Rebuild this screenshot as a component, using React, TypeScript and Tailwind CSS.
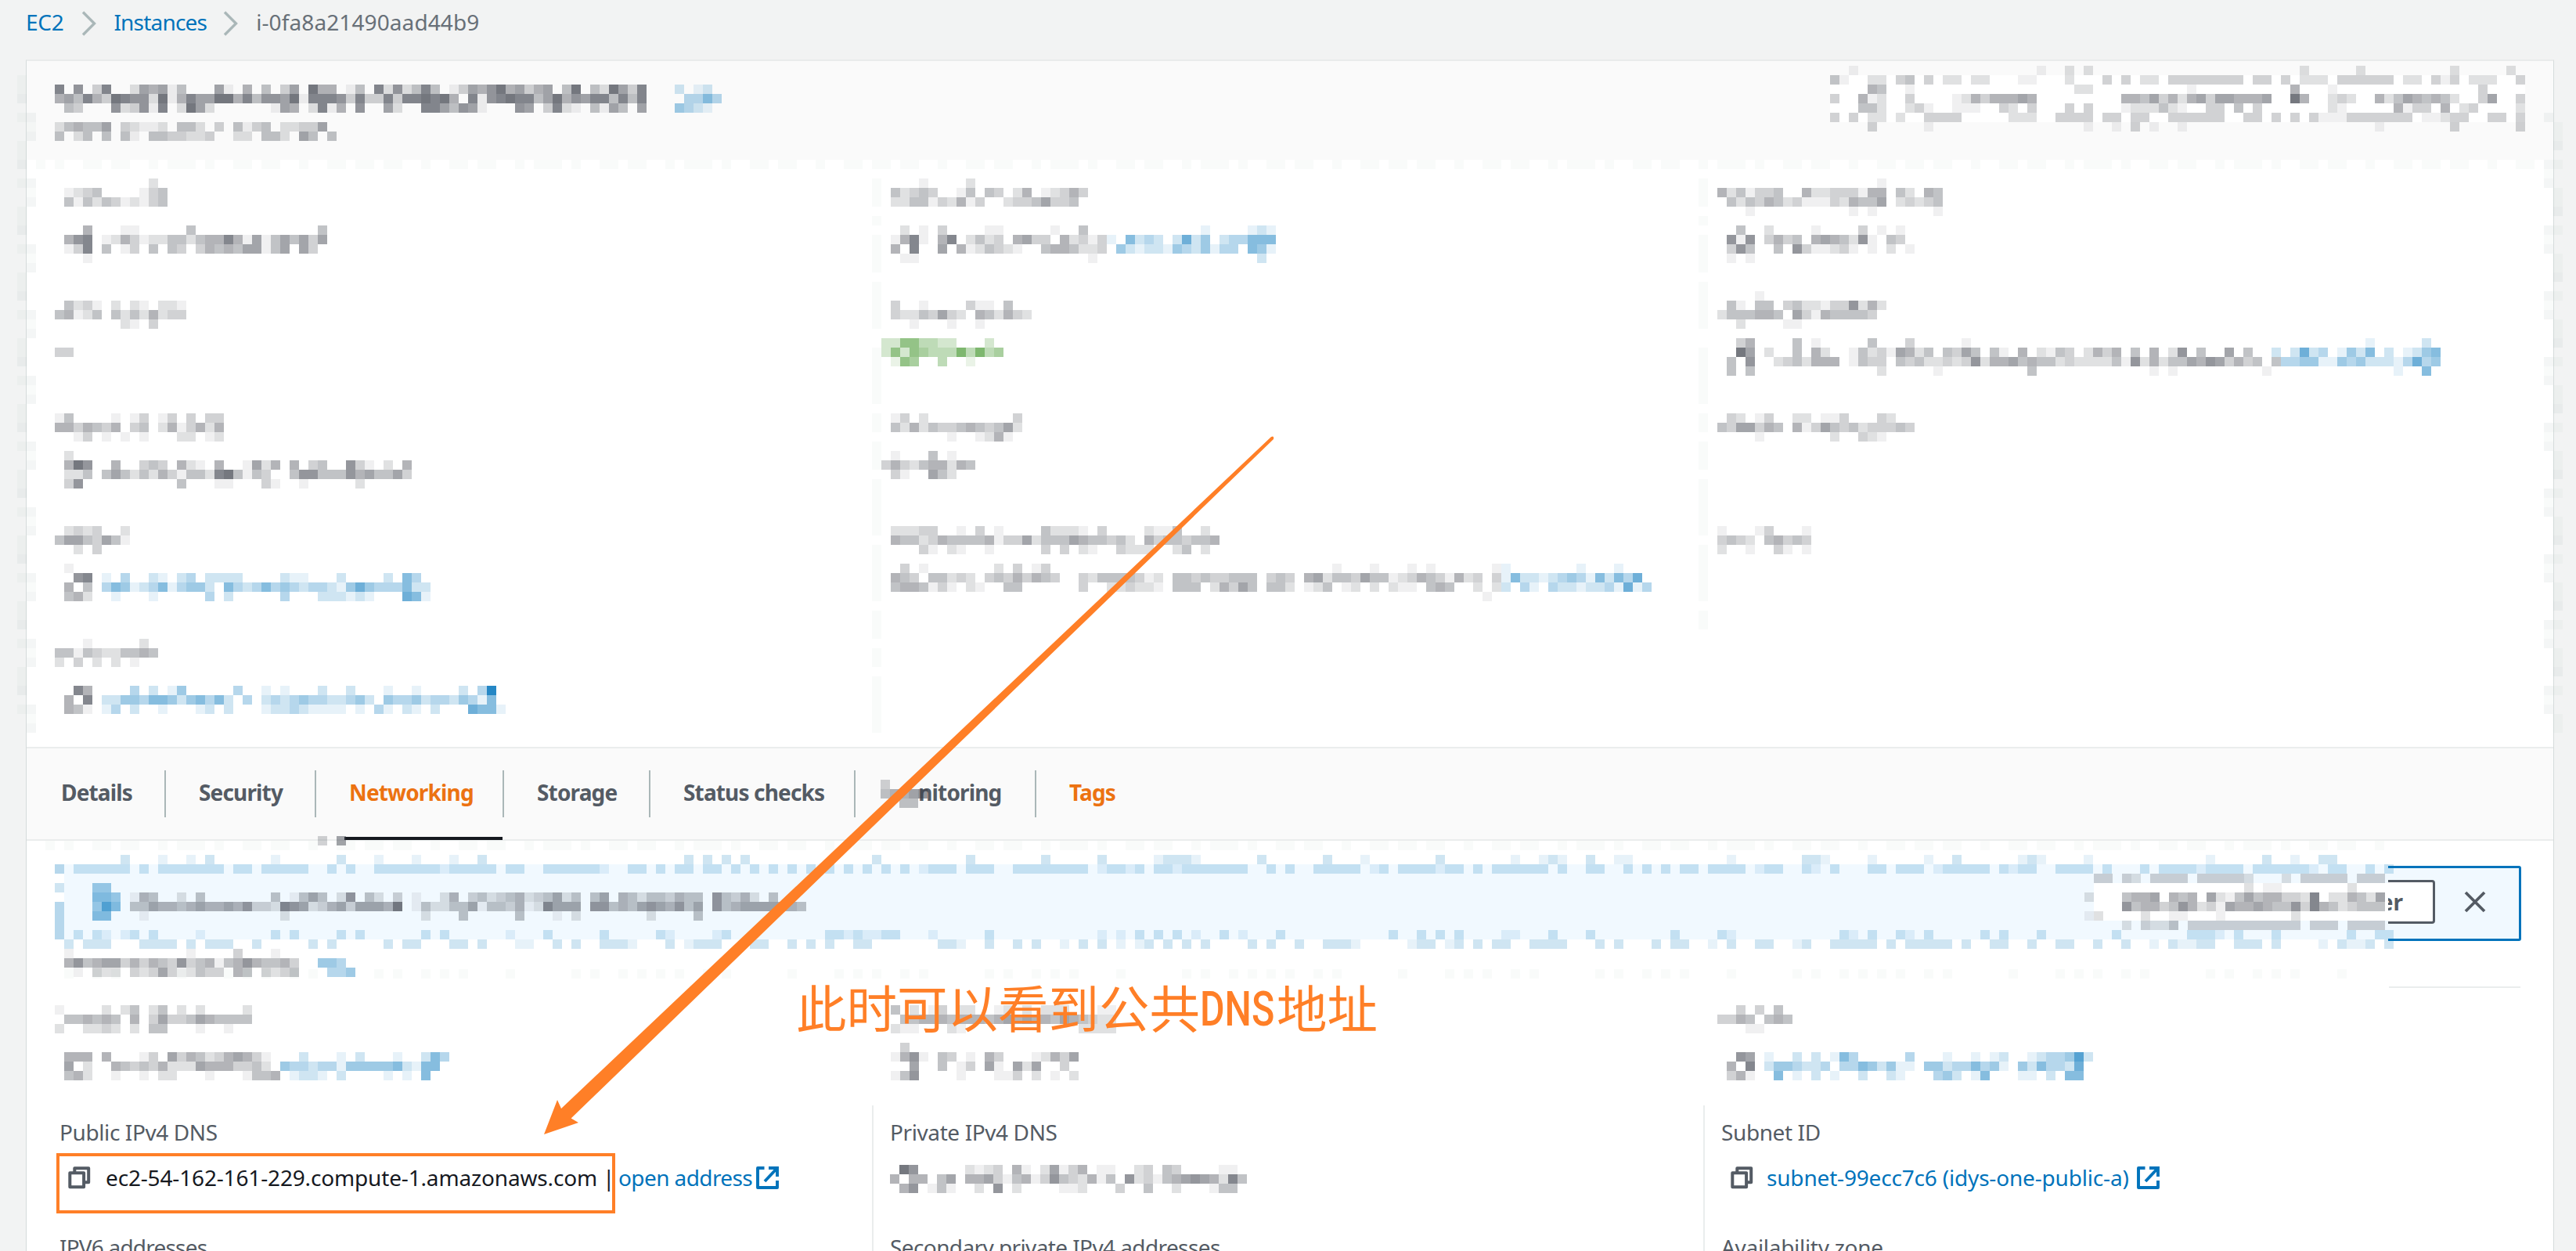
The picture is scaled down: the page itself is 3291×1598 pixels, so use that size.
import React from 'react';

type Tone = 'blue' | 'green';

const CELL = 12;

function shade(ch: string, tone: Tone): [string, number] | null {
  if (ch === '0') return null;
  if (ch === '-') return ['#9fb4b0', 0.06];
  if (ch === '=') return ['#8a9a9a', 0.09];
  if (ch >= '1' && ch <= '9') return ['#3a3f49', Number(ch) * 0.078];
  return [tone === 'green' ? '#1d8102' : '#0073bb', (ch.charCodeAt(0) - 96) * 0.095];
}

/* Pixelated strip: one character per cell, digits are grey levels, letters are coloured levels. */
function Mosaic({ rows, tone = 'blue', className = '' }: { rows: string[]; tone?: Tone; className?: string }) {
  const width = Math.max(1, ...rows.map((r) => r.length)) * CELL;
  const height = rows.length * CELL;
  const rects: React.ReactNode[] = [];
  rows.forEach((row, y) => {
    let x = 0;
    while (x < row.length) {
      let end = x + 1;
      while (end < row.length && row[end] === row[x]) end += 1;
      const s = shade(row[x], tone);
      if (s) {
        rects.push(
          <rect key={`${x}-${y}`} x={x * CELL} y={y * CELL} width={(end - x) * CELL} height={CELL} fill={s[0]} fillOpacity={s[1]} />,
        );
      }
      x = end;
    }
  });
  return (
    <svg width={width} height={height} viewBox={`0 0 ${width} ${height}`} shapeRendering="crispEdges" className={`block shrink-0 ${className}`} aria-hidden="true">
      {rects}
    </svg>
  );
}

function pattern(length: number, step: number, mod: number, limit: number) {
  return Array.from({ length }, (_, i) => ((i * step + Math.floor(i / 5) * 3) % mod < limit ? '-' : '0')).join('');
}

const title = [
  '807038002656140006105040360955014082724840136579563560490429638000b0ab',
  '5648539877291586699584776918887383383889895081789884695768848480000ccec',
  '043000723718029620000001650281507006200886476100076038210416406000dcba',
  '',
  '245446032112044203041340223360',
  '402404041044332230022044206404',
];

const actions = [
  '00100000000000000000001002020000000000000000000000200000200000000020000020',
  '41002203403022022000110002000303022033333333033030222033333302203130222003',
  '00005400100000000000000000220000000000100000000005000100000000000000030000',
  '30051200300001253555650000000005546352563665556009500232005246545420036003',
  '00044200231001110032030003030001222421003304030000000210000051330502300002',
  '30302202003333000002220033330330330033333300330303031113333333011233003303',
  '00003000001000000000000000010010301001000000000000000000001000000030000003',
];

const colA: string[][] = [
  [
    '00000000002', '012340000134', '041424312134', '', '',
    '00050001100000400000000000004', '05780125312244245585161464636', '0138040130404303545466146063', '0001', '', '', '',
  ],
  ['', '04231020210221', '45124042425233', '00000002103', '', '', '33', '', '', '', '', ''],
  [
    '', '140000101301303033', '553543503402513525', '001301010100022012', '',
    '02', '05970050034305210500162505034007310205', '02240464242531442894143004774447564463', '037000000000040001100031001000002', '', '', '',
  ],
  [
    '', '02323002', '46643641', '00203', '',
    '01', '00780a0c00ba0bc0bbbb0000baa000b0000b0ec', '05040cedabceacddb0ecbcecdcbccbadfdcccebb', '045200a000a00000c0b00000c000bbbaba000fea', '', '', '',
  ],
  [
    '', '0001000002', '44143224454', '203020201', '', '',
    '00850000c0b0ad00000c00a0a000b00b000a00a0000b0ci', '05080bbddceedbdeceb0c0bcbcdccbbcdb0dccdbccbdcae', '05410ac0b00a000ab0b000abbcbaaaa0a0ca0ba0b000feea', '', '', '',
  ],
];

const colB: { rows: string[]; tone?: Tone }[] = [
  {
    rows: [
      '0000100002', '0423430014043025012353', '022441325130023346334', '', '',
      '002010300001100000100400000000' + '0000a0000aba', '015810580242305633052313a0ebcb0bfbd0bcceee', '0508006051243210045542230dbabbadcbdacc0eda', '0011000000000000000000100000000000000000b0', '', '', '',
    ],
  },
  {
    tone: 'green',
    rows: ['', '03001000031104', '0322436320542532', '00010001001', '', 'bbeeccbb000b', 'bebedcccfcfcd', '0aed00c00a', '', '', '', ''],
  },
  { rows: ['', '013020000000003', '042524334543462', '00000001001251', '', '01000401', '3532455254', '03100642', '', '', '', ''] },
  {
    rows: [
      '', '02223300103010000422210300002114002', '054423544445133624446544342053443445', '00003102100100000303021003222002402', '',
      '0030100000002030130000000000000000000000' + '00000000100010001010000001a0000000a000a',
      '054304423203435354300324444312044343344403430562443644123543152303aebbabcdcaebecf',
      '045541310210044000000300223221044402536404420124012020211045400202b0ca0cbbabbcafac',
      '00000000000000000000000000000000000000000000000000000000000000001', '', '', '',
    ],
  },
];

const colC: string[][] = [
  [
    '000000000000000001', '524133400522333155042054', '042435423111325446023234', '000100000000001010000001', '',
    '00400200001000030101', '07170353405654271043', '037400407311231010201', '0101', '', '', '',
  ],
  [
    '00001', '041044034221337252', '24445540631544443', '002000011', '',
    '003500004010000040003000001000' + '000000000000000000000000000000000000000a00000b',
    '009602004052001423165240436404105021430253504050270400604' + '00b0bfbc0adbe0b0abde',
    '04070023425550143304342232372556454423222241725244' + '6576353404ccddaadcdbbbacfcd',
    '0404000000000000020000010000000004000000000000101000000000100000000000000a00e'.replace('00a00e', '0a00e'), '', '', '',
  ],
  ['', '0320130022011300032', '436635405136434233343', '000010000000200321', '', '', '', '', '', '', '', ''],
  ['', '1000130001', '3432045343', '2001003101', '', '', '', '', '', '', '', ''],
];

const alertRows = [
  '0000000b000a00a0b000000a000000b000a000a000a00b000000000000000000000b0b0b0b000000000000' +
    '0b000000000b0000000b00000b00000abbba000000b000000b000a0000000b0000000a00aba00b00aa00' + '0000000' +
    '0a0000000bba0000a00000a00b000000aba0000a000000000000a00000b00a00bb00000',
  'c0bbbbbb0b0bbbbbbb0bb0bbbbb00b0b00bbbbbbbabbbbb0bb00bbbbbba00bb0b0bb0bb0b0b0b0b0b0b0b0' +
    'b0b0b0abbb0bbb00bbbbbbbb0abbab0bbabbbbbbb00b0b00bbbbb0ab0bbbbabb0b0bbbbbb0b00bb00b0b' + '0b0bb0b' +
    'bbb0abb00ba0b000bb0bbb0abbbbb0babb00bbbb0b000b0bbbbabbbb0bbbbbba0bb00b0b',
  '',
  'b000dd',
  '0000eed0154002040000000401464027042030100250342345234624046054244354407435204',
  'c000dge04465545655657332876235636665901422446144351286660774546765746074566665' + '54',
  'c000ee000100000000000000200000000000000200040000040001020000000200004',
  'c',
  'c0b0ba0ab0b0000a0000000b0b0000b0b000000b0b000000a000b00000b00000ba0000ab0000000000bbab' +
    'aabb000a00000b00000000000a0a0b0b0b0a00b0a000b00000000000b00b0b0b0000aa000b000b000000' + '00b0000' +
    'ba00000000000ba0b00ba0b00000b0b000b0000000b0000000bbba0b000b0000000b00bb',
  '0b0bbb000bbbb0b0bbb00b00000b0b00000b0bb000bb0b000aa00b0b00bbba000b0abbb000bb00b0b0b00b' +
    'b0000000bba00b00b0b00a0b0b0a0ab0b0b0b0000b0b00b00bbba00000abb0ab0b0bb00bbbb000b0b000' + 'b0bb00a' +
    '0b00bb00ab00bbbbb0b0bbbbb0b00bb00b00bb00b00b00a0baabb00bbb0b0000a0baab0b',
];

const alertButton = [
  '03303203333033333200020333330333',
  '00000000000000000201100000002000',
  '20004556054506214645533280225426',
  '00007455347523165565447385423444',
  '12000020011000100000002000000000',
  '00002032240333333333333033303333',
];

const heading = ['010000000000001000030001', '0574566353543734514575445300ddc', '00103220323631243305403234000ccd'];

const netA = [
  '100002024024020200002', '044545405036334654444', '200223202044000100100', '', '',
  '055505000130635423565310' + '00b000a0b000a00bec', '0602005434352226555334' + '20dccbccadddddebaee', '0452001001022000100014450abba0b0000a0a0e',
];
const netB = [
  '402013022001202022200011', '044555455545656554654322', '211000210000000000002222', '',
  '03', '15710430105300012536', '00600401306106260030', '14700001000113020102',
];
const netC = [
  '00303040', '33540454', '00011', '', '',
  '00760a00b0b0aec00000c000a00a0ab00abccdgb', '05080bddcbbc0ccedbdaa0ddbccecda0dbeccbf', '035100e0a0b0a00b00ba000cdb0ae000aa0b0ee',
];
const privateDns = ['0970000021230510261350110023043000011', '50550460556314513743251407231456765284', '0570141002070200001120003004002000144'];

const dividerRows = Array.from({ length: 60 }, (_, i) => (i % 7 === 3 || i % 11 === 5 ? '' : '-'));

function edge(seed: number, count: number, flip: boolean) {
  return Array.from({ length: count }, (_, i) => {
    const n = (i * 5 + seed) % 7;
    const page = n < 3 ? '-' : n === 5 ? '=' : '0';
    const panel = n % 3 === 1 ? '=' : n === 6 ? '-' : '0';
    return flip ? panel + page : page + panel;
  });
}

function CopyIcon() {
  return (
    <svg width="29" height="29" viewBox="0 0 29 29" fill="none" stroke="#545b64" strokeWidth="4" strokeLinejoin="round" className="block shrink-0">
      <path d="M2.3 8.3h17.8v18H2.3z" />
      <path d="M8.3 7V2.3h17.9v17.9H21" />
    </svg>
  );
}

function ExternalIcon() {
  return (
    <svg width="29" height="29" viewBox="0 0 29 29" fill="none" stroke="#0073bb" strokeWidth="3.9" className="block shrink-0">
      <path d="M10.5 2H2v25h25v-9" strokeLinejoin="round" />
      <path d="M16 2h11v11M27 2 11 19" />
    </svg>
  );
}

function Chevron() {
  return (
    <svg width="20" height="32" viewBox="0 0 20 32" fill="none" stroke="#aab7b8" strokeWidth="3.4" className="block shrink-0">
      <path d="M2 1.5 16.5 16 2 30.5" />
    </svg>
  );
}

const tabs = [
  { name: 'Details', box: 'w-[178px] pl-[44px]' },
  { name: 'Security', box: 'w-[192px] pl-[42px]' },
  { name: 'Networking', box: 'w-[240px] pl-[42px]' },
  { name: 'Storage', box: 'w-[187px] pl-[42px]' },
  { name: 'Status checks', box: 'w-[262px] pl-[42px]' },
  { name: 'Monitoring', box: 'w-[231px] pl-[38px]' },
  { name: 'Tags', box: 'w-[180px] pl-[42px]' },
];

export default function App() {
  return (
    <div className="relative h-[1598px] w-[3291px] overflow-hidden bg-[#f2f3f3] font-['Noto_Sans'] text-[28px] leading-[36px] text-[#16191f]">
      <nav className="flex h-[76px] items-start pl-[33px] pt-[10px] text-[#687078]">
        <a className="tracking-[-0.3px] text-[#0073bb]">EC2</a>
        <span className="ml-[23px] mt-[4px]"><Chevron /></span>
        <a className="ml-[21px] tracking-[-0.8px] text-[#0073bb]">Instances</a>
        <span className="ml-[21px] mt-[4px]"><Chevron /></span>
        <span className="ml-[22px] tracking-[0.1px]">i-0fa8a21490aad44b9</span>
      </nav>

      <main className="ml-[33px] h-[1522px] w-[3230px] border-x border-t-2 border-x-[#d5dbdb] border-t-[#e9ebeb] bg-white">
        <header className="flex h-[126px] justify-between bg-[#fafafa] pl-9 pr-9">
          <Mosaic rows={title} className="mt-[30px]" />
          <div className="mt-[6px]">
            <Mosaic rows={actions} className="bg-[linear-gradient(transparent_12px,#fff_12px,#fff_72px,transparent_72px)]" />
          </div>
        </header>
        <Mosaic rows={[pattern(266, 7, 11, 6)]} className="ml-3" />

        <section className="grid h-[738px] grid-cols-[1044px_12px_1044px_24px_1fr] pl-9 pt-3">
          <div>{colA.map((rows, i) => <Mosaic key={i} rows={rows} />)}</div>
          <Mosaic rows={dividerRows} />
          <div>{colB.map((item, i) => <Mosaic key={i} rows={item.rows} tone={item.tone} />)}</div>
          <Mosaic rows={dividerRows.slice(0, 48)} />
          <div>{colC.map((rows, i) => <Mosaic key={i} rows={rows} />)}</div>
        </section>

        <div className="flex h-[120px] border-y-2 border-[#eaeded] bg-[#fafafa] font-bold text-[#545b64]">
          {tabs.map((tab, i) => (
            <div key={tab.name} className={`relative flex h-[116px] items-start pt-[38px] ${tab.box}`}>
              <span className={`whitespace-nowrap tracking-[-0.85px] ${tab.name === 'Networking' || tab.name === 'Tags' ? 'text-[#ec7211]' : ''}`}>{tab.name}</span>
              {tab.name === 'Monitoring' && (
                <span className="absolute left-[32px] top-10 h-9 w-[48px] bg-[#fafafa]">
                  <Mosaic rows={['3', '45567', '0044']} />
                </span>
              )}
              {i < 6 && <i className="absolute right-0 top-7 h-[60px] w-[2px] bg-[#aab7b8]" />}
              {tab.name === 'Networking' && <i className="absolute -bottom-px left-[36px] right-[2px] h-[4px] bg-[#16191f]" />}
            </div>
          ))}
        </div>

        <section className="relative h-[524px]">
          <div className="flex h-[129px] pl-9 pt-8">
            <div className="flex h-[96px] w-[3151px] items-start justify-end rounded-[3px] border-[3px] border-[#0073bb] bg-[#f1f9ff] pr-[42px] pt-[15px]">
              <button className="h-[56px] w-[460px] rounded-[4px] border-[3px] border-[#545b64] bg-white pr-[38px] text-right font-bold leading-[46px] text-[#545b64]">Reachability Analyzer</button>
              <svg width="28" height="28" viewBox="0 0 28 28" stroke="#545b64" strokeWidth="3.8" className="ml-[37px] mt-[14px] block">
                <path d="M2 2l24 24M26 2 2 26" />
              </svg>
            </div>
          </div>
          <div className="absolute left-6 top-0 h-[146px] w-[2993px] bg-white">
            <Mosaic rows={[pattern(249, 7, 11, 6)]} />
            <div className="absolute -top-[6px] left-[348px]"><Mosaic rows={['306']} /></div>
            <div className="absolute left-6 top-[30px] h-24 w-[2969px] bg-[#f1f9ff]" />
            <div className="absolute left-3 top-[18px]"><Mosaic rows={alertRows} /></div>
            <div className="absolute right-0 top-[54px] h-12 w-[376px] bg-white" />
            <div className="absolute right-0 top-[42px] w-[388px] overflow-hidden"><Mosaic rows={alertButton} /></div>
          </div>

          <div className="relative flex h-[59px] items-start justify-between pl-9 pr-[42px] pt-[9px]">
            <Mosaic rows={heading} />
            <i className="mt-[48px] h-[2px] w-[168px] bg-[#eaeded]" />
          </div>
          <Mosaic rows={[pattern(247, 5, 13, 4)]} className="relative -mt-6 mb-3 ml-12" />

          <div className="grid h-[150px] grid-cols-[1068px_1056px_1fr] pl-9 pt-[22px]">
            <Mosaic rows={netA} />
            <Mosaic rows={netB} />
            <Mosaic rows={netC} />
          </div>

          <div className="grid h-[186px] grid-cols-[1080px_1062px_1fr] overflow-hidden">
            <div className="pl-[42px] pt-4 text-[#545b64]">
              <div className="tracking-[-0.4px]">Public IPv4 DNS</div>
              <div className="relative mt-[22px] flex items-center whitespace-nowrap">
                <span className="ml-[11px]"><CopyIcon /></span>
                <span className="ml-[19px] w-[655px] tracking-[-0.16px] text-[#16191f]">ec2-54-162-161-229.compute-1.amazonaws.com |</span>
                <a className="w-[176px] tracking-[-0.6px] text-[#0073bb]">open address</a>
                <ExternalIcon />
                <i className="absolute -left-1 -top-[13px] h-[77px] w-[714px] border-4 border-[#ff7f27]" />
              </div>
              <div className="mt-[53px] tracking-[-0.8px]">IPV6 addresses</div>
            </div>
            <div className="border-l-2 border-[#eaeded] pl-[21px] pt-4 text-[#545b64]">
              <div className="tracking-[-0.4px]">Private IPv4 DNS</div>
              <Mosaic rows={privateDns} className="mt-6" />
              <div className="mt-[51px] tracking-[-0.6px]">Secondary private IPv4 addresses</div>
            </div>
            <div className="border-l-2 border-[#eaeded] pl-[21px] pt-4 text-[#545b64]">
              <div className="tracking-[-0.4px]">Subnet ID</div>
              <div className="mt-[22px] flex items-center whitespace-nowrap">
                <span className="ml-[12px]"><CopyIcon /></span>
                <a className="ml-[17px] w-[473px] tracking-[-0.18px] text-[#0073bb]">subnet-99ecc7c6 (idys-one-public-a)</a>
                <ExternalIcon />
              </div>
              <div className="mt-[53px] tracking-[-0.3px]">Availability zone</div>
            </div>
          </div>
        </section>
      </main>

      <div className="absolute left-[22px] top-24"><Mosaic rows={edge(2, 70, false)} /></div>
      <div className="absolute left-[3250px] top-[144px]"><Mosaic rows={edge(4, 66, true)} /></div>

      <svg width="960" height="910" viewBox="680 550 960 910" className="absolute left-[680px] top-[550px]">
        <path d="M695 1449 712 1405 717 1416 1624 558Q1628 556 1627 561L729.6 1428.5 739 1434Z" fill="#ff7f27" />
      </svg>
      <div className="absolute left-[1017px] top-[1239px] flex whitespace-nowrap font-['Noto_Sans_CJK_SC',sans-serif] text-[64.5px] leading-[92px] text-[#ff7f27]">
        <span>此时可以看到公共</span>
        <span className="w-[98px]"><span className="relative -top-[3px] inline-block origin-left scale-x-[0.78] font-['Roboto'] text-[62px] font-medium">DNS</span></span>
        <span>地址</span>
      </div>
    </div>
  );
}
